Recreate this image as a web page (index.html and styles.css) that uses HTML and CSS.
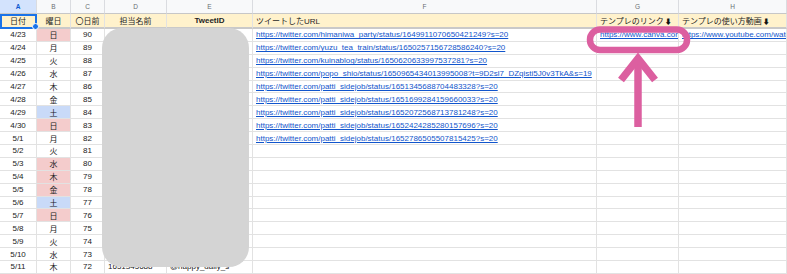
FILE: index.html
```html
<!DOCTYPE html>
<html lang="ja">
<head>
  <meta charset="UTF-8" />
  <title>ツイート管理シート</title>
  <link rel="stylesheet" href="styles.css">
</head>
<body>
  <div class="sheet">
    <!-- column letters -->
    <div class="row letters">
      <div class="cell picked">A</div>
      <div class="cell">B</div>
      <div class="cell">C</div>
      <div class="cell">D</div>
      <div class="cell">E</div>
      <div class="cell">F</div>
      <div class="cell">G</div>
      <div class="cell">H</div>
    </div>

    <!-- header row -->
    <div class="row head">
      <div class="cell mid active">日付</div>
      <div class="cell mid">曜日</div>
      <div class="cell mid">〇日前</div>
      <div class="cell mid">担当名前</div>
      <div class="cell mid strong">TweetID</div>
      <div class="cell">ツイートしたURL</div>
      <div class="cell">テンプレのリンク<span class="down">⬇</span></div>
      <div class="cell">テンプレの使い方動画<span class="down">⬇</span></div>
    </div>

    <div id="rows"></div>

    <!-- hidden names -->
    <div class="mask"></div>

    <!-- pink callout -->
    <svg class="callout" width="787" height="274" viewBox="0 0 787 274">
      <rect x="590" y="29.5" width="97" height="20.5" rx="10" fill="none" stroke="#dc5fa0" stroke-width="6.5"/>
      <line x1="638" y1="60" x2="638" y2="127" stroke="#dc5fa0" stroke-width="7.5"/>
      <polyline points="621,80 638,58.5 655,80" fill="none" stroke="#dc5fa0" stroke-width="7.5" stroke-linejoin="miter"/>
    </svg>
  </div>

  <script>
    const days = [
      ["4/23", "日", "sun"], ["4/24", "月"], ["4/25", "火"], ["4/26", "水"],
      ["4/27", "木"], ["4/28", "金"], ["4/29", "土", "sat"], ["4/30", "日", "sun"],
      ["5/1", "月"], ["5/2", "火"], ["5/3", "水", "sun"], ["5/4", "木", "sun"],
      ["5/5", "金", "sun"], ["5/6", "土", "sat"], ["5/7", "日", "sun"], ["5/8", "月"],
      ["5/9", "火"], ["5/10", "水"], ["5/11", "木"]
    ];

    const urls = [
      "https://twitter.com/himaniwa_party/status/1649911070650421249?s=20",
      "https://twitter.com/yuzu_tea_train/status/1650257156728586240?s=20",
      "https://twitter.com/kuinablog/status/1650620633997537281?s=20",
      "https://twitter.com/popo_shio/status/1650965434013995008?t=9D2sl7_DZqisti5J0v3TkA&s=19",
      "https://twitter.com/patti_sidejob/status/1651345688704483328?s=20",
      "https://twitter.com/patti_sidejob/status/1651699284159660033?s=20",
      "https://twitter.com/patti_sidejob/status/1652072568713781248?s=20",
      "https://twitter.com/patti_sidejob/status/1652424285280157696?s=20",
      "https://twitter.com/patti_sidejob/status/1652786505507815425?s=20"
    ];

    const rows = document.getElementById("rows");

    days.forEach(([date, day, tone], i) => {
      const row = document.createElement("div");
      row.className = "row";
      const url = urls[i] ? `<a href="#">${urls[i]}</a>` : "";
      const last = i === days.length - 1;
      row.innerHTML = `
        <div class="cell mid">${date}</div>
        <div class="cell mid ${tone || ""}">${day}</div>
        <div class="cell mid">${90 - i}</div>
        <div class="cell">${last ? "1651345688" : ""}</div>
        <div class="cell">${last ? "@happy_daily_s" : ""}</div>
        <div class="cell">${url}</div>
        <div class="cell">${i === 0 ? '<a href="#">https://www.canva.com</a>' : ""}</div>
        <div class="cell">${i === 0 ? '<a href="#">https://www.youtube.com/watch?v=kq2aZ</a>' : ""}</div>
      `;
      rows.appendChild(row);
    });
  </script>
</body>
</html>
```

FILE: styles.css
```css
body {
  margin: 0;
  background: #fff;
  font-family: "Liberation Sans", "Noto Sans CJK JP", "DejaVu Sans", sans-serif;
  font-size: 8px;
  color: #222;
  overflow: hidden;
}

.sheet {
  position: relative;
  width: 787px;
  height: 274px;
  overflow: hidden;
}

.row {
  display: grid;
  grid-template-columns: 37px 34px 34px 62px 86px 344px 82px 108px;
  height: 12.9px;
}

.cell {
  box-sizing: border-box;
  display: flex;
  align-items: center;
  padding: 0 3px;
  border-right: 1px solid #e2e2e2;
  border-bottom: 1px solid #e2e2e2;
  white-space: nowrap;
  overflow: hidden;
}

.cell.mid {
  justify-content: center;
}

.cell a {
  color: #1155cc;
  text-decoration: underline;
}

/* column letters */
.letters {
  height: 14px;
  background: #f8f9fa;
}

.letters .cell {
  justify-content: center;
  font-size: 6.5px;
  color: #6b6f73;
  border-right-color: #dadce0;
  border-bottom-color: #c7c7c7;
}

.letters .cell.picked {
  background: #d3e3fd;
  color: #0b57d0;
  font-weight: bold;
}

/* header row */
.head {
  height: 15px;
  background: #fff2cc;
}

.head .cell {
  border-bottom: 2px solid #c9c9c9;
  color: #1f1f1f;
}

.head .cell.strong {
  font-weight: bold;
}

.down {
  font-size: 7px;
  margin-left: 1px;
  color: #111;
}

.cell.active {
  position: relative;
  overflow: visible;
  outline: 2px solid #1a73e8;
  outline-offset: -2px;
}

.cell.active::after {
  content: "";
  position: absolute;
  right: -3px;
  bottom: -3px;
  width: 5px;
  height: 5px;
  border-radius: 50%;
  background: #1a73e8;
  border: 1px solid #fff;
  z-index: 2;
}

.sun {
  background: #f4cccc;
}

.sat {
  background: #c9daf8;
}

.mask {
  position: absolute;
  left: 102px;
  top: 28px;
  width: 147px;
  height: 239px;
  border-radius: 20px;
  background: #d4d4d4;
}

.callout {
  position: absolute;
  left: 0;
  top: 0;
  pointer-events: none;
}
```
